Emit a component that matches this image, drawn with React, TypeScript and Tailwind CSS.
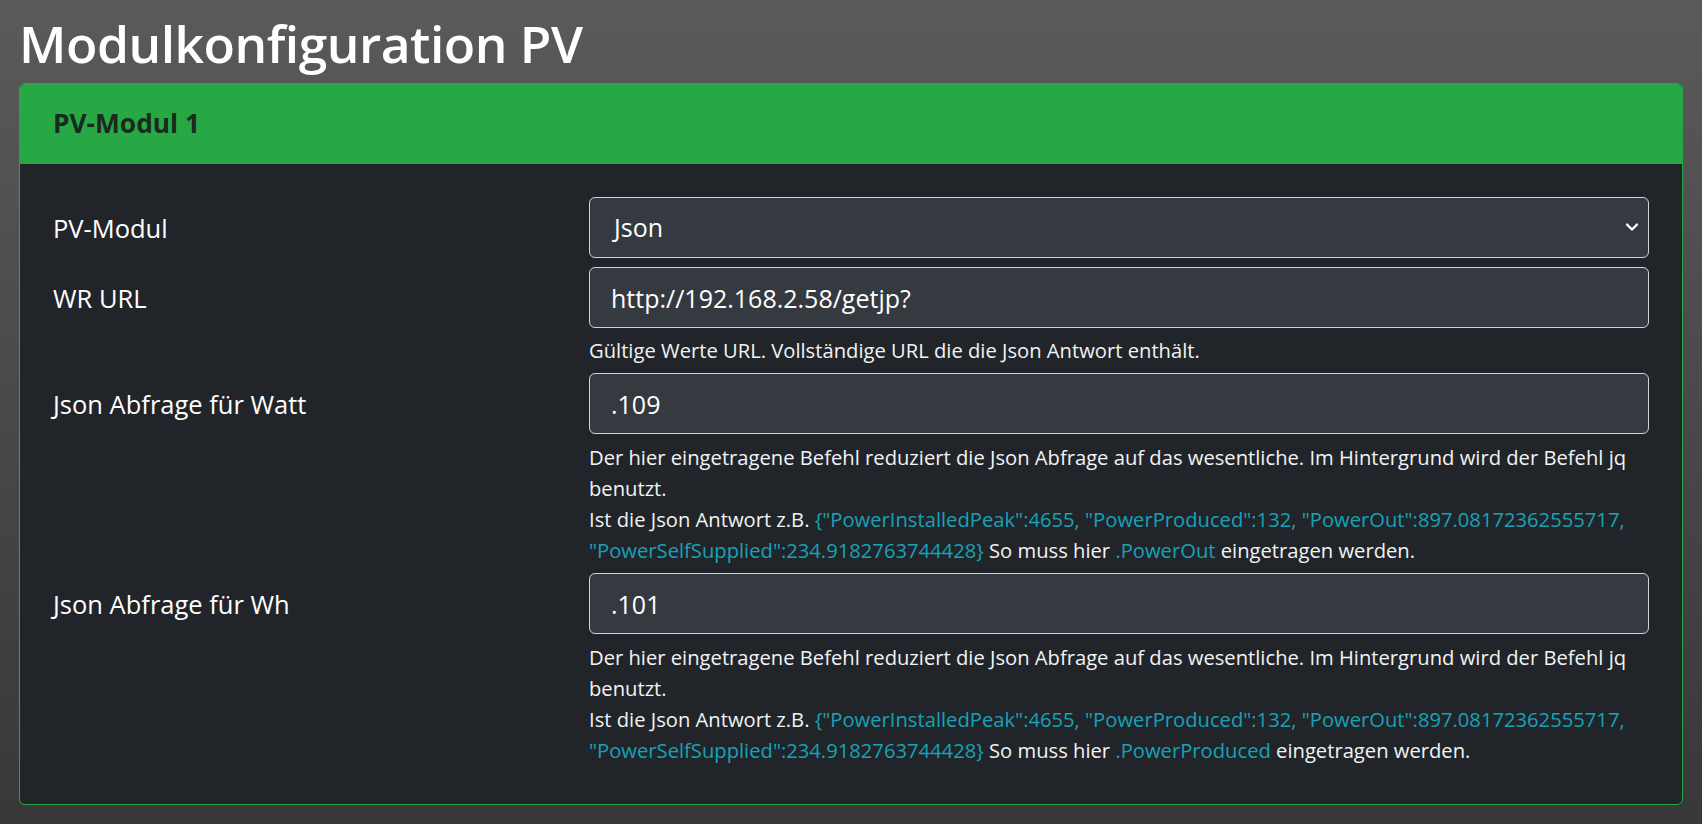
import React from "react";

const font = { fontFamily: '"Open Sans", "Noto Sans", sans-serif' };

const sample =
  '{"PowerInstalledPeak":4655, "PowerProduced":132, "PowerOut":897.08172362555717, "PowerSelfSupplied":234.9182763744428}';

function JqHelp({ field }: { field: string }) {
  return (
    <div className="mt-[8px] text-[20.2px] leading-[31px] text-[#f1f3f5]">
      Der hier eingetragene Befehl reduziert die Json Abfrage auf das wesentliche. Im Hintergrund wird der Befehl jq
      benutzt.
      <br />
      Ist die Json Antwort z.B. <span className="text-[#17a2b8]">{sample}</span> So muss hier{" "}
      <span className="text-[#17a2b8]">{field}</span> eingetragen werden.
    </div>
  );
}

function Field({ value }: { value: string }) {
  return (
    <input
      readOnly
      value={value}
      className="h-[61px] w-full rounded-[6px] border border-[#ced4da] bg-[#343a40] px-[21px] text-[25px] text-white outline-none"
    />
  );
}

export default function App() {
  return (
    <main
      className="min-h-[824px] bg-gradient-to-b from-[#5a5a5a] to-[#383838] px-[19px] pb-[18px] text-white"
      style={font}
    >
      <h1 className="pt-[4px] text-[51.5px] font-semibold leading-[79px] tracking-[-0.5px]">Modulkonfiguration PV</h1>

      <section className="overflow-hidden rounded-[6px] border-[1.5px] border-[#28a745] bg-[#212529]">
        <div className="flex h-[80px] items-center bg-[#28a745] px-[33px]">
          <h2 className="text-[26.3px] font-bold text-[#1a2a1e]">PV-Modul 1</h2>
        </div>

        <div className="px-[33px] pb-[38px] pt-[33px] text-[25.5px]">
          {/* PV-Modul */}
          <div className="grid grid-cols-[536px_1fr]">
            <label className="pt-[13px] leading-[36px]">PV-Modul</label>
            <div className="relative">
              <div className="flex h-[61px] w-full items-center rounded-[6px] border border-[#ced4da] bg-[#343a40] px-[24px] text-[25px]">
                Json
              </div>
              <svg
                className="absolute right-[10px] top-[25px]"
                width="14"
                height="10"
                viewBox="0 0 14 10"
                fill="none"
                stroke="#fff"
                strokeWidth="2.4"
                strokeLinecap="round"
                strokeLinejoin="round"
              >
                <path d="M2 2.5l5 5 5-5" />
              </svg>
            </div>
          </div>

          {/* WR URL */}
          <div className="mt-[9px] grid grid-cols-[536px_1fr]">
            <label className="pt-[13px] leading-[36px]">WR URL</label>
            <div>
              <Field value="http://192.168.2.58/getjp?" />
              <div className="mt-[7px] text-[20.2px] leading-[31px] text-[#f1f3f5]">
                Gültige Werte URL. Vollständige URL die die Json Antwort enthält.
              </div>
            </div>
          </div>

          {/* Watt */}
          <div className="mt-[7px] grid grid-cols-[536px_1fr]">
            <label className="pt-[13px] leading-[36px]">Json Abfrage für Watt</label>
            <div>
              <Field value=".109" />
              <JqHelp field=".PowerOut" />
            </div>
          </div>

          {/* Wh */}
          <div className="mt-[7px] grid grid-cols-[536px_1fr]">
            <label className="pt-[13px] leading-[36px]">Json Abfrage für Wh</label>
            <div>
              <Field value=".101" />
              <JqHelp field=".PowerProduced" />
            </div>
          </div>
        </div>
      </section>
    </main>
  );
}
